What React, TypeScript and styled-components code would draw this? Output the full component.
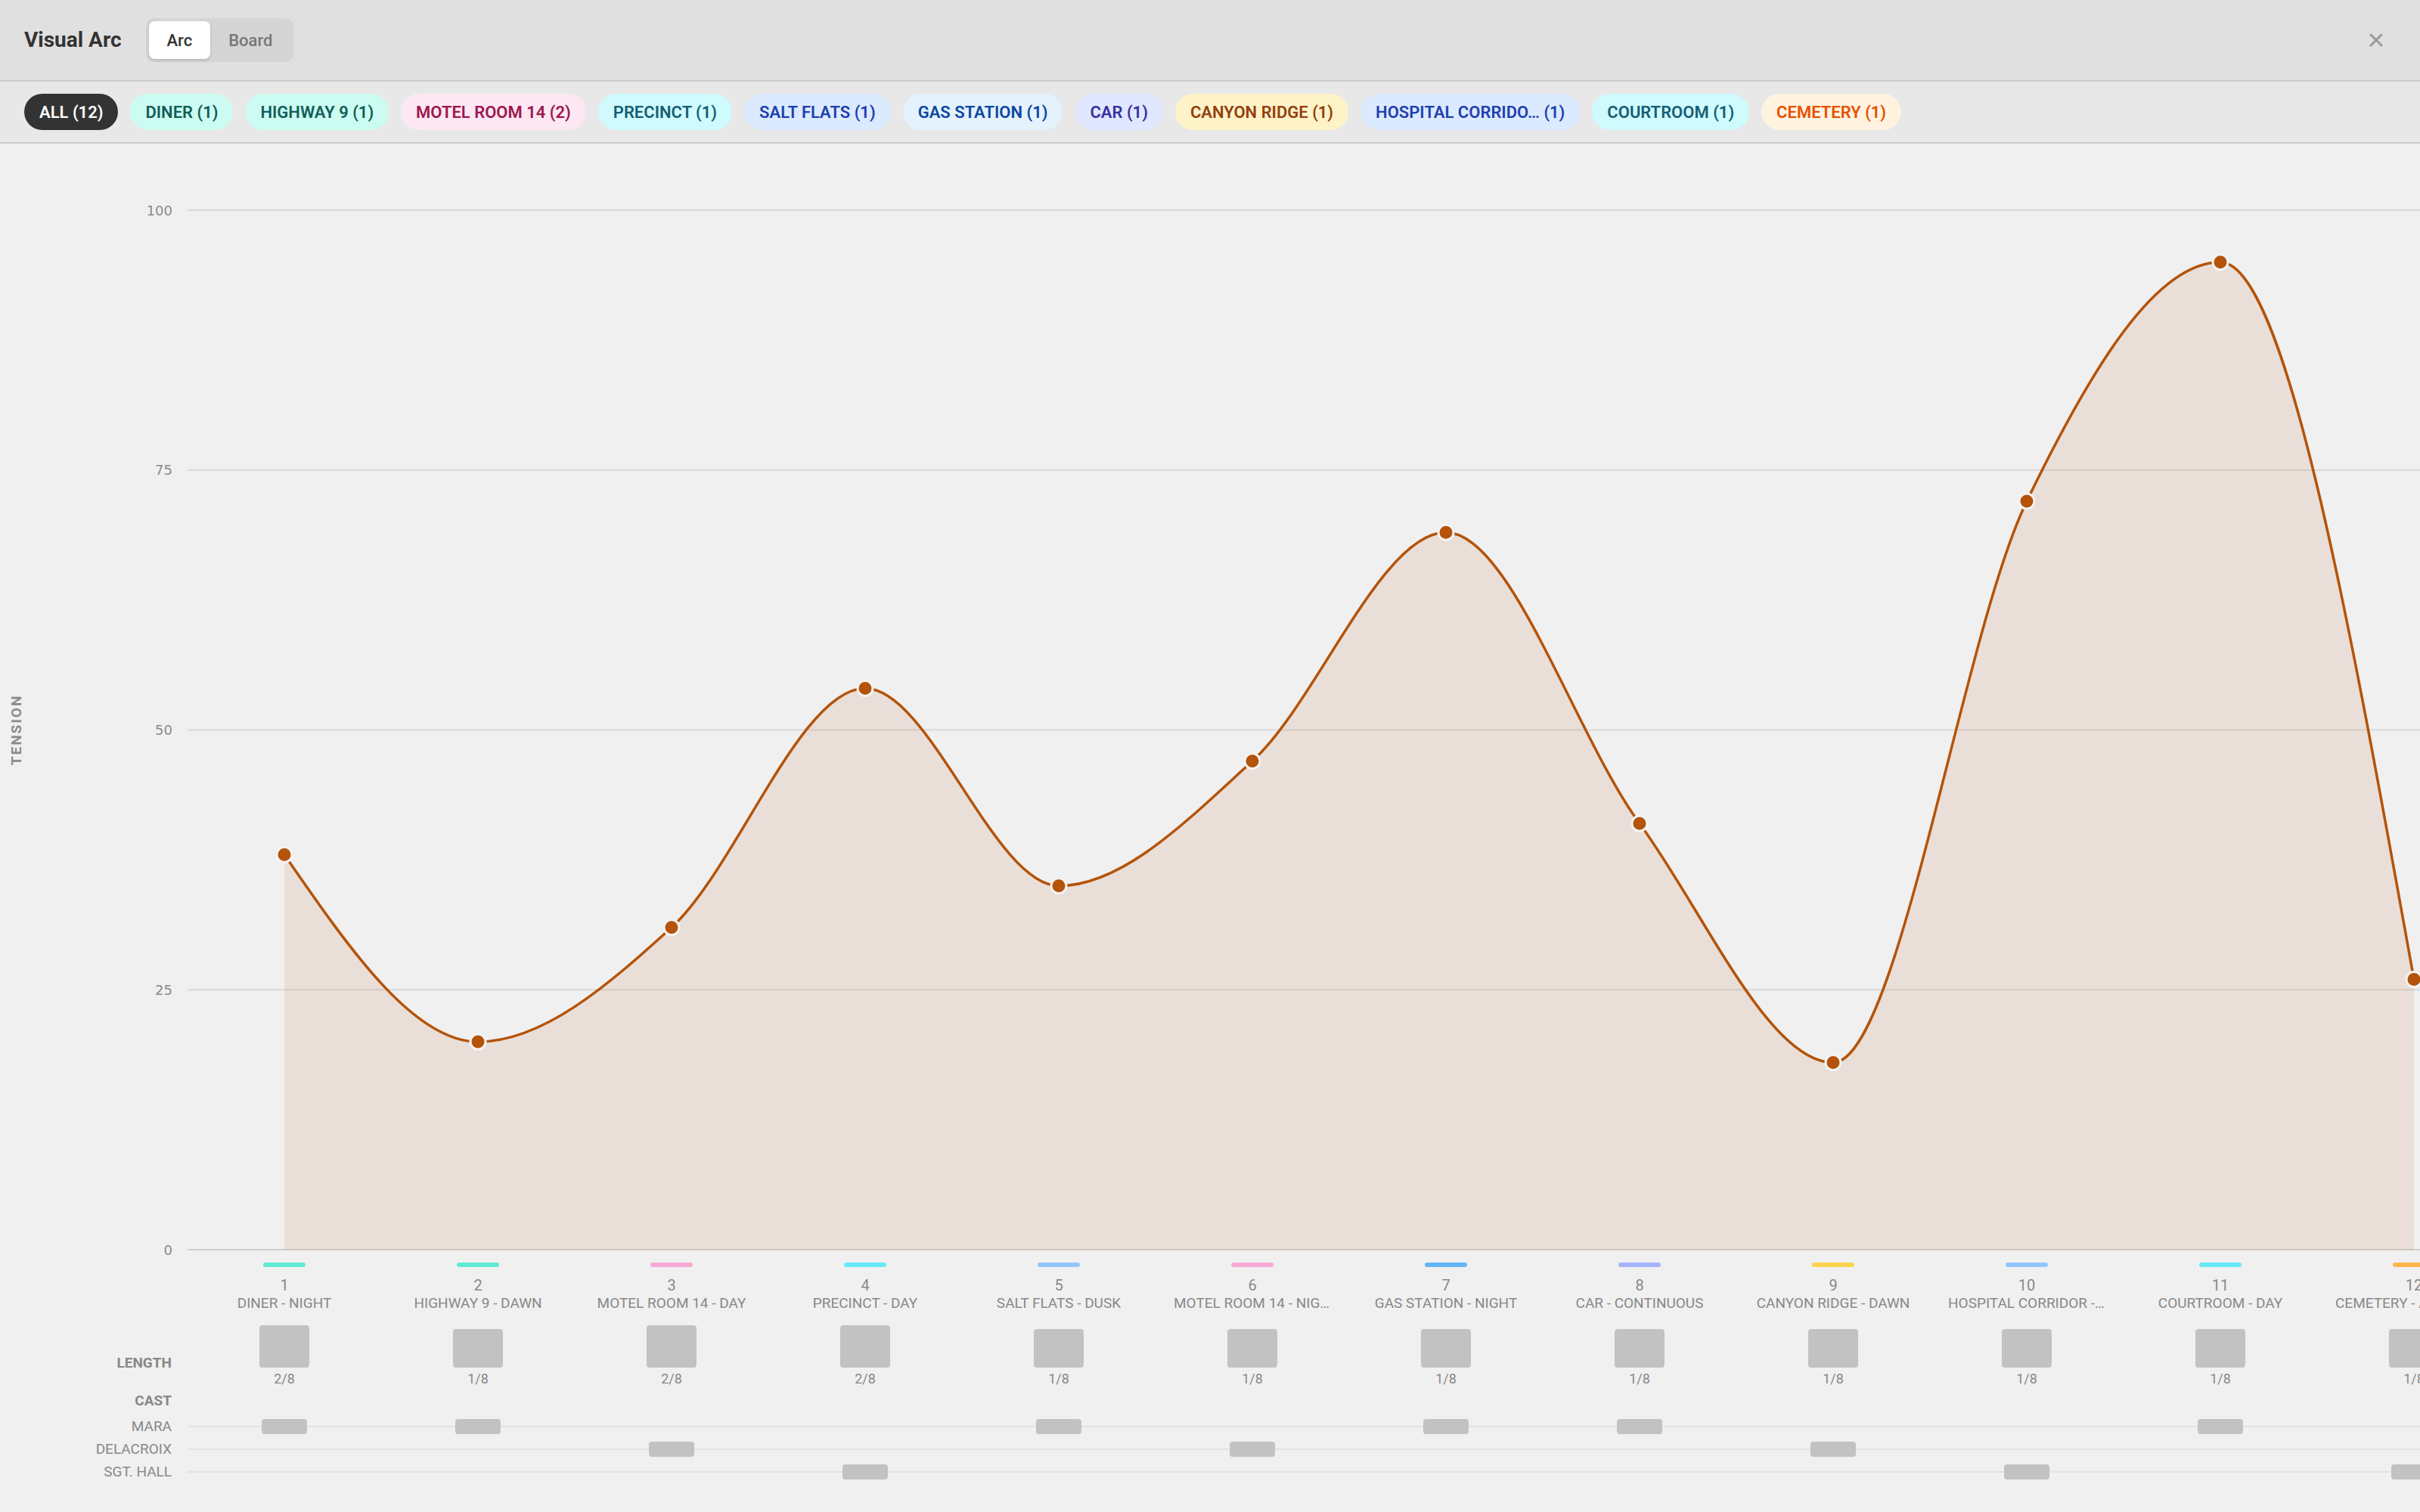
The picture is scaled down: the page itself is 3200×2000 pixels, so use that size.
import React from 'react';
import styled, { createGlobalStyle } from 'styled-components';

const GlobalStyle = createGlobalStyle`
  html, body { margin: 0; padding: 0; background: #f0f0f0; }
  body { font-family: Roboto, "Noto Sans", sans-serif; }
  * { box-sizing: border-box; }
`;

type Scene = {
  n: number;
  name: string;
  swatch: string;
  tension: number;
  eighths: number;
};

const scenes: Scene[] = [
  { n: 1, name: 'DINER - NIGHT', swatch: '#5eead4', tension: 38, eighths: 2 },
  { n: 2, name: 'HIGHWAY 9 - DAWN', swatch: '#5eead4', tension: 20, eighths: 1 },
  { n: 3, name: 'MOTEL ROOM 14 - DAY', swatch: '#f9a8d4', tension: 31, eighths: 2 },
  { n: 4, name: 'PRECINCT - DAY', swatch: '#67e8f9', tension: 54, eighths: 2 },
  { n: 5, name: 'SALT FLATS - DUSK', swatch: '#93c5fd', tension: 35, eighths: 1 },
  { n: 6, name: 'MOTEL ROOM 14 - NIGHT', swatch: '#f9a8d4', tension: 47, eighths: 1 },
  { n: 7, name: 'GAS STATION - NIGHT', swatch: '#64b5f6', tension: 69, eighths: 1 },
  { n: 8, name: 'CAR - CONTINUOUS', swatch: '#a5b4fc', tension: 41, eighths: 1 },
  { n: 9, name: 'CANYON RIDGE - DAWN', swatch: '#fcd34d', tension: 18, eighths: 1 },
  { n: 10, name: 'HOSPITAL CORRIDOR - NIGHT', swatch: '#93c5fd', tension: 72, eighths: 1 },
  { n: 11, name: 'COURTROOM - DAY', swatch: '#67e8f9', tension: 95, eighths: 1 },
  { n: 12, name: 'CEMETERY - AFTERNOON', swatch: '#ffb74d', tension: 26, eighths: 1 },
];

const cast: { name: string; scenes: number[] }[] = [
  { name: 'MARA', scenes: [1, 2, 5, 7, 8, 11] },
  { name: 'DELACROIX', scenes: [3, 6, 9] },
  { name: 'SGT. HALL', scenes: [4, 10, 12] },
];

type ChipTone = { bg: string; fg: string };
const chips: { label: string; tone: ChipTone }[] = [
  { label: 'ALL (12)', tone: { bg: '#333333', fg: '#ffffff' } },
  { label: 'DINER (1)', tone: { bg: '#ccfbf1', fg: '#115e59' } },
  { label: 'HIGHWAY 9 (1)', tone: { bg: '#ccfbf1', fg: '#115e59' } },
  { label: 'MOTEL ROOM 14 (2)', tone: { bg: '#fce7f3', fg: '#9d174d' } },
  { label: 'PRECINCT (1)', tone: { bg: '#cffafe', fg: '#155e75' } },
  { label: 'SALT FLATS (1)', tone: { bg: '#dbeafe', fg: '#1e40af' } },
  { label: 'GAS STATION (1)', tone: { bg: '#e3f2fd', fg: '#0d47a1' } },
  { label: 'CAR (1)', tone: { bg: '#e0e7ff', fg: '#3730a3' } },
  { label: 'CANYON RIDGE (1)', tone: { bg: '#fef3c7', fg: '#92400e' } },
  { label: 'HOSPITAL CORRIDO\u2026 (1)', tone: { bg: '#dbeafe', fg: '#1e40af' } },
  { label: 'COURTROOM (1)', tone: { bg: '#cffafe', fg: '#155e75' } },
  { label: 'CEMETERY (1)', tone: { bg: '#fff3e0', fg: '#e65100' } },
];

/* ---------- layout ---------- */

const Page = styled.div`
  width: 100vw;
  height: 100vh;
  display: flex;
  flex-direction: column;
  overflow: hidden;
  background: #f0f0f0;
`;

const Header = styled.header`
  flex: none;
  height: 108px;
  display: flex;
  align-items: center;
  gap: 32px;
  padding: 0 34px 0 32px;
  background: #e0e0e0;
  border-bottom: 2px solid #cbcbcb;
`;

const Title = styled.h1`
  margin: 0;
  font-size: 28px;
  font-weight: 700;
  color: #333;
  line-height: 34px;
`;

const Toggle = styled.div`
  display: flex;
  padding: 4px;
  border-radius: 10px;
  background: #d5d5d5;
`;

const ToggleButton = styled.button<{ $active?: boolean }>`
  height: 50px;
  padding: 0 24px;
  border: none;
  border-radius: 8px;
  font-family: Roboto, sans-serif;
  font-size: 22px;
  font-weight: 500;
  color: ${(p) => (p.$active ? '#333' : '#777')};
  background: ${(p) => (p.$active ? '#ffffff' : 'transparent')};
  box-shadow: ${(p) => (p.$active ? '0 2px 4px rgba(0,0,0,0.14)' : 'none')};
`;

const CloseButton = styled.button`
  margin-left: auto;
  width: 48px;
  height: 48px;
  display: flex;
  align-items: center;
  justify-content: center;
  border: none;
  background: transparent;
  padding: 0;
`;

const ChipBar = styled.div`
  flex: none;
  height: 82px;
  display: flex;
  align-items: center;
  gap: 16px;
  padding: 0 32px;
  background: #e8e8e8;
  border-bottom: 2px solid #cbcbcb;
`;

const Chip = styled.span<{ $bg: string; $fg: string }>`
  height: 48px;
  display: inline-flex;
  align-items: center;
  padding: 0 20px;
  border-radius: 24px;
  background: ${(p) => p.$bg};
  color: ${(p) => p.$fg};
  font-size: 22px;
  font-weight: 600;
  white-space: nowrap;
`;

const Main = styled.main`
  flex: 1;
  overflow: hidden;
  padding-top: 38px;
`;

const Canvas = styled.div`
  width: 3320px;
  display: flex;
  flex-direction: column;
`;

const ChartSvg = styled.svg`
  display: block;
  flex: none;
`;

const Track = styled.div<{ $mt?: number }>`
  display: grid;
  grid-template-columns: 248px repeat(12, 256px);
  margin-top: ${(p) => p.$mt ?? 0}px;
`;

const CastBlock = styled.div`
  display: flex;
  flex-direction: column;
  margin-top: 7px;
`;

const SceneHead = styled.div`
  display: flex;
  flex-direction: column;
  align-items: center;
  padding-top: 2px;
`;

const Swatch = styled.div<{ $color: string }>`
  width: 56px;
  height: 6px;
  border-radius: 3px;
  background: ${(p) => p.$color};
  margin-bottom: 12px;
`;

const SceneNum = styled.div`
  font-size: 20px;
  line-height: 24px;
  color: #888;
`;

const SceneName = styled.div`
  max-width: 208px;
  font-size: 19px;
  line-height: 24px;
  color: #888;
  white-space: nowrap;
  overflow: hidden;
  text-overflow: ellipsis;
`;

const RowLabel = styled.div<{ $bold?: boolean; $mt?: number }>`
  padding-right: 21px;
  text-align: right;
  font-size: 19px;
  line-height: 24px;
  font-weight: ${(p) => (p.$bold ? 700 : 400)};
  color: #888;
  margin-top: ${(p) => p.$mt ?? 0}px;
`;

const LengthCell = styled.div`
  display: flex;
  flex-direction: column;
  align-items: center;
`;

const BarSlot = styled.div`
  height: 56px;
  display: flex;
  align-items: flex-end;
`;

const LengthBar = styled.div<{ $h: number }>`
  width: 66px;
  height: ${(p) => p.$h}px;
  border-radius: 4px;
  background: #c2c2c2;
`;

const Fraction = styled.div`
  margin-top: 4px;
  font-size: 18px;
  line-height: 22px;
  color: #888;
`;

const CastRow = styled.div`
  display: grid;
  grid-template-columns: 248px repeat(12, 256px);
  height: 30px;
`;

const CastLabel = styled.div`
  padding-right: 21px;
  text-align: right;
  font-size: 19px;
  line-height: 30px;
  color: #888;
`;

const CastCell = styled.div`
  display: flex;
  align-items: center;
  justify-content: center;
  background: linear-gradient(#e2e2e2, #e2e2e2) center / 100% 2px no-repeat;
`;

const CastMark = styled.div`
  width: 60px;
  height: 20px;
  border-radius: 4px;
  background: #c2c2c2;
`;

/* ---------- chart ---------- */

const W = 3320;
const H = 1440;
const LEFT = 248;
const COL = 256;
const TOP = 50;
const PH = 1375;
const yOf = (v: number) => TOP + ((100 - v) * PH) / 100;
const xOf = (i: number) => LEFT + COL / 2 + COL * i;

function monotonePath(pts: [number, number][]): string {
  const n = pts.length;
  const sign = (v: number) => (v < 0 ? -1 : 1);
  const t: number[] = new Array(n).fill(0);
  for (let k = 1; k < n - 1; k++) {
    const [x0, y0] = pts[k - 1];
    const [x1, y1] = pts[k];
    const [x2, y2] = pts[k + 1];
    const h0 = x1 - x0;
    const h1 = x2 - x1;
    const s0 = (y1 - y0) / h0;
    const s1 = (y2 - y1) / h1;
    const p = (s0 * h1 + s1 * h0) / (h0 + h1);
    t[k] = (sign(s0) + sign(s1)) * Math.min(Math.abs(s0), Math.abs(s1), 0.5 * Math.abs(p)) || 0;
  }
  {
    const h = pts[1][0] - pts[0][0];
    t[0] = (3 * (pts[1][1] - pts[0][1]) / h - t[1]) / 2;
    const hl = pts[n - 1][0] - pts[n - 2][0];
    t[n - 1] = (3 * (pts[n - 1][1] - pts[n - 2][1]) / hl - t[n - 2]) / 2;
  }
  let d = `M${pts[0][0]},${pts[0][1]}`;
  for (let k = 0; k < n - 1; k++) {
    const [x0, y0] = pts[k];
    const [x1, y1] = pts[k + 1];
    const dx = (x1 - x0) / 3;
    d += ` C${x0 + dx},${y0 + dx * t[k]} ${x1 - dx},${y1 - dx * t[k + 1]} ${x1},${y1}`;
  }
  return d;
}

const TensionChart: React.FC = () => {
  const pts: [number, number][] = scenes.map((s, i) => [xOf(i), yOf(s.tension)]);
  const line = monotonePath(pts);
  const base = yOf(0);
  const area = `${line} L${pts[pts.length - 1][0]},${base} L${pts[0][0]},${base} Z`;
  const ticks = [0, 25, 50, 75, 100];
  const midY = yOf(50);
  return (
    <ChartSvg width={W} height={H} viewBox={`0 0 ${W} ${H}`}>
      {ticks.map((v) => (
        <g key={v}>
          <line
            x1={LEFT}
            x2={W}
            y1={yOf(v)}
            y2={yOf(v)}
            stroke={v === 0 ? '#cdcdcd' : '#d9d9d9'}
            strokeWidth={2}
          />
          <text
            x={228}
            y={yOf(v)}
            textAnchor="end"
            dominantBaseline="central"
            fontFamily="'DejaVu Sans', sans-serif"
            fontSize={18}
            fill="#8a8a8a"
          >
            {v}
          </text>
        </g>
      ))}
      <text
        x={21}
        y={midY}
        transform={`rotate(-90 21 ${midY})`}
        textAnchor="middle"
        dominantBaseline="central"
        fontFamily="Roboto, sans-serif"
        fontWeight={700}
        fontSize={19}
        letterSpacing={2}
        fill="#8a8a8a"
      >
        TENSION
      </text>
      <path d={area} fill="#b45309" fillOpacity={0.1} />
      <path d={line} fill="none" stroke="#b45309" strokeWidth={3.5} />
      {pts.map(([x, y], i) => (
        <circle key={i} cx={x} cy={y} r={10} fill="#b45309" stroke="#f3f3f3" strokeWidth={3} />
      ))}
    </ChartSvg>
  );
};

const barHeight = (eighths: number) => (eighths >= 2 ? 56 : 51);

export default function App() {
  return (
    <>
      <GlobalStyle />
      <Page>
        <Header>
          <Title>Visual Arc</Title>
          <Toggle>
            <ToggleButton $active>Arc</ToggleButton>
            <ToggleButton>Board</ToggleButton>
          </Toggle>
          <CloseButton aria-label="Close">
            <svg width="18" height="18" viewBox="0 0 18 18">
              <path d="M2 2 L16 16 M16 2 L2 16" stroke="#9a9a9a" strokeWidth="3" strokeLinecap="round" />
            </svg>
          </CloseButton>
        </Header>
        <ChipBar>
          {chips.map((c) => (
            <Chip key={c.label} $bg={c.tone.bg} $fg={c.tone.fg}>
              {c.label}
            </Chip>
          ))}
        </ChipBar>
        <Main>
          <Canvas>
            <TensionChart />
            <Track>
              <div />
              {scenes.map((s) => (
                <SceneHead key={s.n}>
                  <Swatch $color={s.swatch} />
                  <SceneNum>{s.n}</SceneNum>
                  <SceneName>{s.name}</SceneName>
                </SceneHead>
              ))}
            </Track>
            <Track $mt={17}>
              <RowLabel $bold $mt={38}>
                LENGTH
              </RowLabel>
              {scenes.map((s) => (
                <LengthCell key={s.n}>
                  <BarSlot>
                    <LengthBar $h={barHeight(s.eighths)} />
                  </BarSlot>
                  <Fraction>{s.eighths}/8</Fraction>
                </LengthCell>
              ))}
            </Track>
            <Track $mt={6}>
              <RowLabel $bold>CAST</RowLabel>
            </Track>
            <CastBlock>
              {cast.map((c) => (
                <CastRow key={c.name}>
                  <CastLabel>{c.name}</CastLabel>
                  {scenes.map((s) => (
                    <CastCell key={s.n}>{c.scenes.includes(s.n) && <CastMark />}</CastCell>
                  ))}
                </CastRow>
              ))}
            </CastBlock>
          </Canvas>
        </Main>
      </Page>
    </>
  );
}
